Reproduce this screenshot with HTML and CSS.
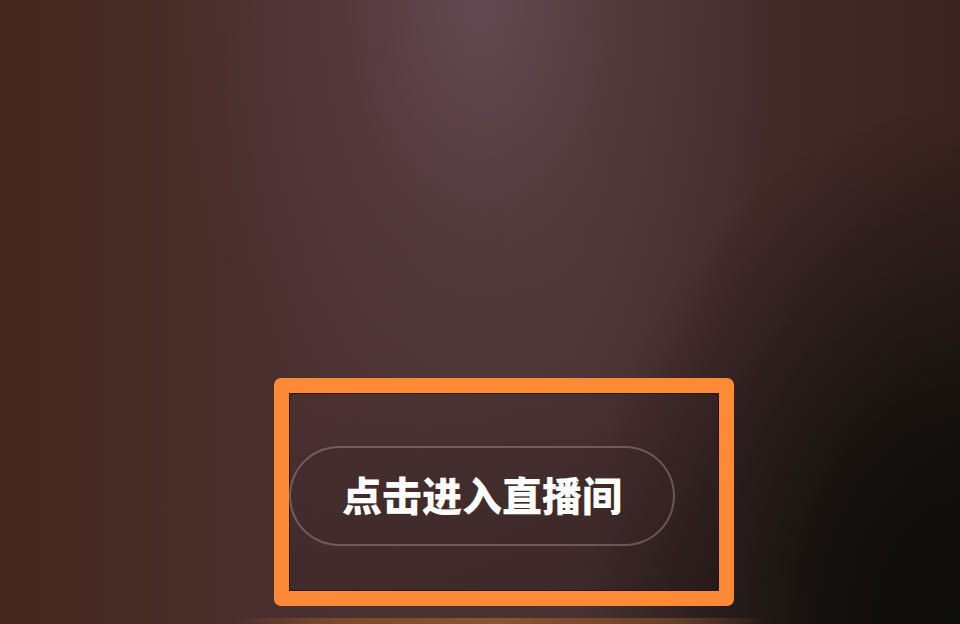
FILE: index.html
```html
<!DOCTYPE html>
<html lang="zh">
<head>
<meta charset="utf-8">
<title>直播间</title>
<link rel="stylesheet" href="styles.css">
</head>
<body>
<main class="stage">
  <section class="frame">
    <button class="enter">点击进入直播间</button>
  </section>
  <div class="glow"></div>
</main>
</body>
</html>
```
FILE: styles.css
```css
html, body {
  margin: 0;
  padding: 0;
  width: 960px;
  height: 624px;
  overflow: hidden;
}
body {
  font-family: "Noto Sans CJK SC", "Noto Sans", sans-serif;
  background:
    radial-gradient(ellipse 300px 520px at 50% 0%, rgba(104, 78, 88, 0.85) 0%, rgba(92, 66, 72, 0.5) 45%, rgba(80, 55, 55, 0) 100%),
    radial-gradient(ellipse 380px 520px at 100% 100%, rgba(12, 12, 9, 1) 0%, rgba(12, 12, 9, 0.85) 35%, rgba(12, 12, 9, 0) 100%),
    linear-gradient(90deg, #45291f 0%, #4a3030 35%, #4a3232 60%, #3a2420 100%);
}
.stage {
  height: 624px;
  display: flex;
  flex-direction: column;
  justify-content: flex-end;
  gap: 12px;
}
.frame {
  box-sizing: border-box;
  width: 460px;
  height: 228px;
  margin-left: 274px;
  border: 15px solid #fe8a37;
  border-radius: 7px;
  padding-top: 53px;
  box-shadow: inset 0 0 0 1px rgba(30, 20, 20, 0.7);
  background: linear-gradient(160deg, rgba(78, 50, 50, 0.3), rgba(30, 20, 20, 0.35));
}
.enter {
  display: flex;
  align-items: center;
  justify-content: center;
  box-sizing: border-box;
  width: 386px;
  height: 100px;
  margin: 0;
  padding: 0 0 4px 0;
  border: 2px solid rgba(200, 180, 180, 0.35);
  border-radius: 50px;
  background: rgba(60, 38, 38, 0.2);
  color: #ffffff;
  font-family: "Noto Sans CJK SC", sans-serif;
  font-weight: 900;
  font-size: 40px;
  letter-spacing: 0;
}
.glow {
  height: 6px;
  margin: 0 190px 0 230px;
  background: linear-gradient(90deg, rgba(120, 70, 40, 0) 0%, #7a4a2a 20%, #8a5430 50%, #6a4028 80%, rgba(80, 50, 30, 0) 100%);
}
```
